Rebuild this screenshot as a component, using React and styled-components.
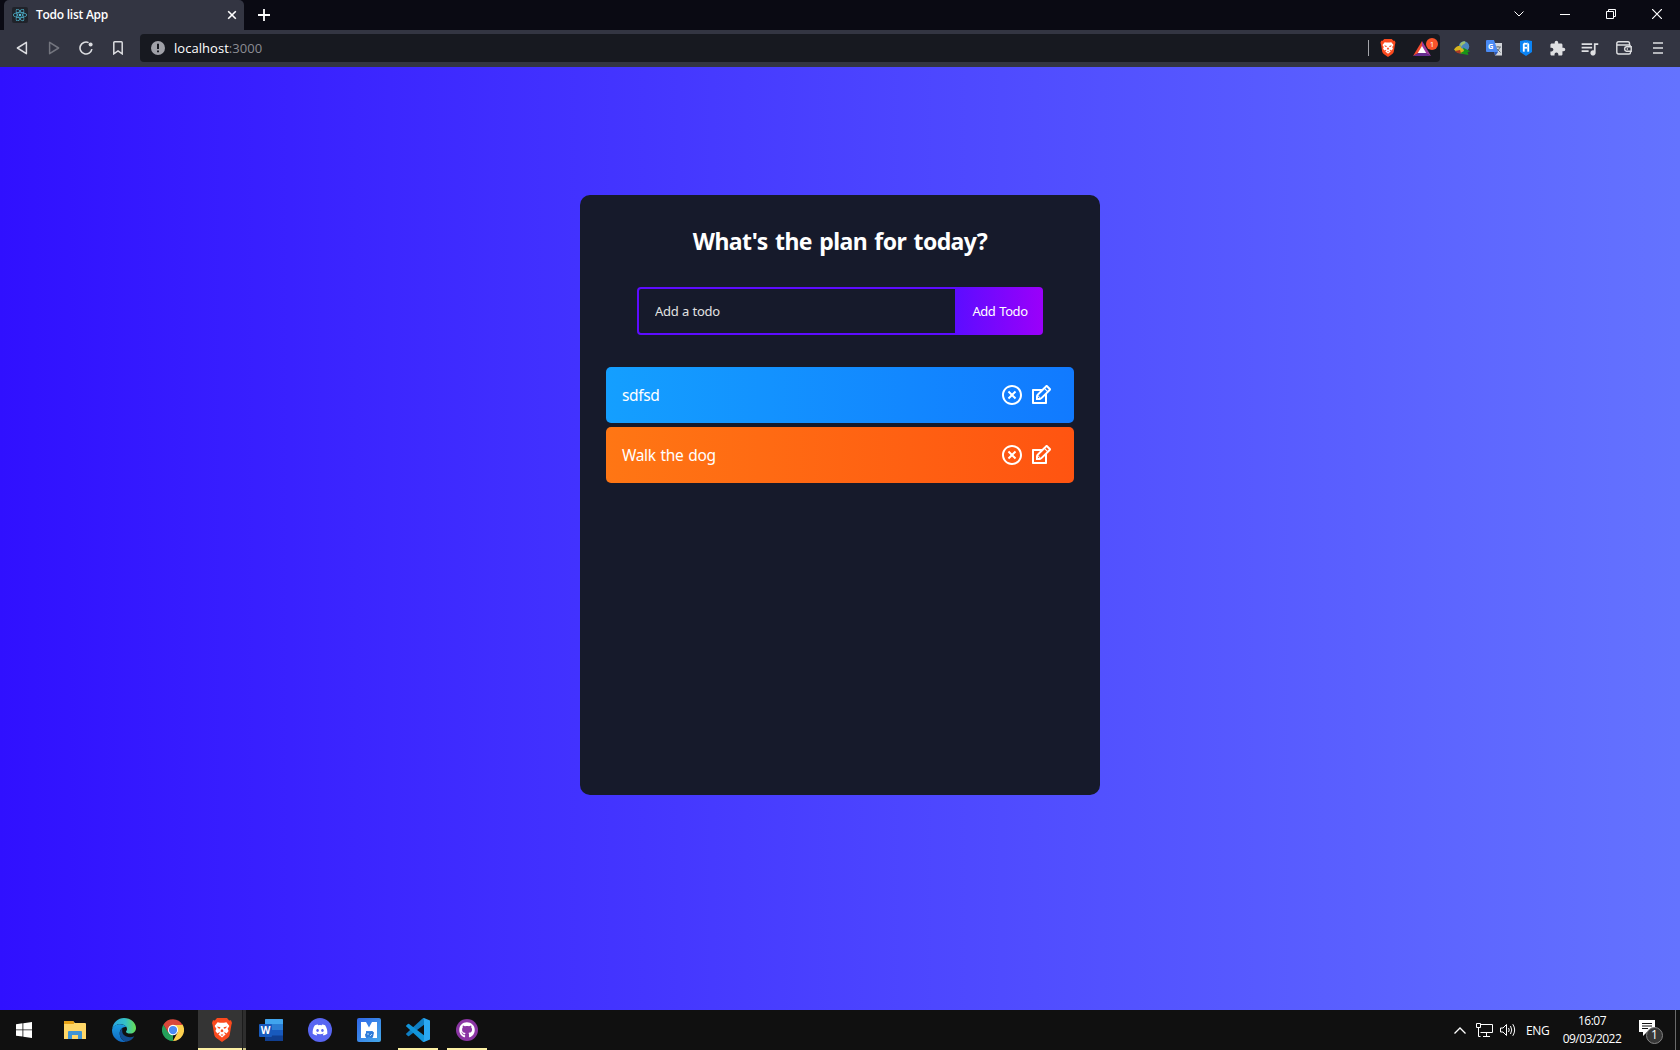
import React from "react";
import styled, { createGlobalStyle, css } from "styled-components";
import { RiCloseCircleLine } from "react-icons/ri";
import { TiEdit } from "react-icons/ti";
import { FaDiscord, FaGithub, FaReact } from "react-icons/fa";
import { MdExtension, MdQueueMusic } from "react-icons/md";

const UI_FONT = `"Open Sans", "Noto Sans", sans-serif`;
const APP_FONT = `"Noto Sans", "Open Sans", sans-serif`;

const GlobalStyle = createGlobalStyle`
  * { box-sizing: border-box; margin: 0; padding: 0; }
  body { font-family: ${UI_FONT}; background: #111; overflow: hidden; }
  svg { display: block; flex: none; }
`;

const Desktop = styled.div`
  display: flex;
  flex-direction: column;
  width: 1680px;
  height: 1050px;
`;

/* ---------- browser chrome ---------- */
const TabStrip = styled.header`
  display: flex;
  align-items: stretch;
  height: 30px;
  padding-left: 4px;
  background: #0a0a13;
  color: #fff;
`;
const Tab = styled.div`
  display: flex;
  align-items: center;
  width: 240px;
  padding: 0 7px 0 8px;
  border-radius: 5px 5px 0 0;
  background: #333542;
`;
const Favicon = styled.span`
  display: grid;
  place-items: center;
  width: 16px;
  height: 16px;
  border-radius: 2px;
  background: #20232a;
  color: #53c1de;
`;
const TabTitle = styled.span`
  flex: 1;
  margin-left: 8px;
  font-size: 12px;
  font-weight: 600;
  letter-spacing: -0.25px;
  line-height: 30px;
`;
const NewTab = styled.div`
  display: flex;
  align-items: center;
  padding-left: 14px;
`;
const WindowControls = styled.div`
  display: flex;
  margin-left: auto;
`;
const WindowButton = styled.div`
  display: grid;
  place-items: center;
  width: 46px;
  height: 28px;
`;
const Toolbar = styled.nav`
  display: flex;
  align-items: center;
  height: 37px;
  padding: 0 6px;
  background: #333542;
  color: #dcdde1;
`;
const NavButton = styled.span`
  display: grid;
  place-items: center;
  width: 32px;
  height: 28px;
  margin-top: -1px;
  opacity: ${(p) => (p.$dim ? 0.38 : 1)};
`;
const AddressBar = styled.div`
  display: flex;
  align-items: center;
  width: 1300px;
  height: 28px;
  margin: -1px 0 0 6px;
  padding: 0 2px 0 11px;
  border-radius: 4px;
  background: #171920;
`;
const Address = styled.span`
  flex: 1;
  margin-left: 9px;
  color: #fff;
  font-size: 13px;
  letter-spacing: 0.04px;
`;
const Port = styled.span`
  color: #8b8c93;
`;
const Divider = styled.span`
  width: 1px;
  height: 16px;
  background: #a4a5aa;
`;
const Shield = styled.span`
  display: grid;
  place-items: center;
  margin: 0 17px 0 11px;
`;
const Rewards = styled.span`
  position: relative;
  width: 25px;
  height: 24px;
  padding-top: 5px;
`;
const RewardsBadge = styled.span`
  position: absolute;
  top: 2px;
  right: 0;
  width: 12px;
  height: 12px;
  border-radius: 50%;
  background: #fb542b;
  color: #fff;
  font-size: 8px;
  line-height: 12px;
  text-align: center;
`;
const Extensions = styled.div`
  display: flex;
  margin-left: 6px;
`;
const Extension = styled.span`
  display: grid;
  place-items: center;
  width: ${(p) => p.$w || 32}px;
  height: 28px;
  margin-top: -1px;
  color: #dedfe2;
`;

/* ---------- todo page ---------- */
const Page = styled.main`
  flex: 1;
  padding-top: 128px;
  background: linear-gradient(90deg, #3010ff 0%, #6473ff 100%);
  font-family: ${APP_FONT};
`;
const TodoApp = styled.section`
  width: 520px;
  height: 600px;
  margin: 0 auto;
  padding-top: 32px;
  border-radius: 10px;
  background: #161a2b;
  text-align: center;
`;
const Heading = styled.h1`
  height: 28px;
  color: #fff;
  font-size: 23px;
  font-weight: 700;
  line-height: 29px;
  letter-spacing: -0.6px;
  word-spacing: 2px;
  white-space: nowrap;
`;
const TodoForm = styled.form`
  display: flex;
  justify-content: center;
  margin: 32px 0;
`;
const TodoInput = styled.input`
  width: 320px;
  height: 48px;
  padding: 0 32px 0 16px;
  border: 2px solid #5d0cff;
  border-radius: 4px 0 0 4px;
  outline: none;
  background: transparent;
  color: #fff;
  font-family: inherit;
  font-size: 13px;
  letter-spacing: -0.3px;
  word-spacing: 0.5px;
  &::placeholder {
    color: #e2e2e2;
    opacity: 1;
  }
`;
const TodoButton = styled.button`
  width: 86px;
  height: 48px;
  border: none;
  border-radius: 0 4px 4px 0;
  background: linear-gradient(90deg, #5d0cff 0%, #9b00fa 100%);
  color: #fff;
  font-family: inherit;
  font-size: 13px;
  letter-spacing: -0.45px;
  word-spacing: 1px;
  white-space: nowrap;
`;
const rowColors = {
  blue: css`linear-gradient(90deg, #149fff 0%, #117aff 100%)`,
  orange: css`linear-gradient(90deg, #ff7614 0%, #ff5411 100%)`,
};
const TodoRow = styled.div`
  display: flex;
  align-items: center;
  justify-content: space-between;
  width: 90%;
  height: 56px;
  margin: 4px auto;
  padding: 0 21px 0 16px;
  border-radius: 5px;
  background: ${(p) => rowColors[p.$tone]};
  color: #fff;
  font-size: 15.5px;
  letter-spacing: -0.35px;
  word-spacing: 1.2px;
`;
const RowIcons = styled.div`
  display: flex;
  align-items: center;
  gap: 5px;
`;

/* ---------- taskbar ---------- */
const Taskbar = styled.footer`
  display: flex;
  height: 40px;
  background: #101010;
  color: #fff;
`;
const StartButton = styled.div`
  display: grid;
  place-items: center;
  width: 48px;
  margin-right: 3px;
`;
const TaskItem = styled.div`
  display: flex;
  flex-direction: column;
  align-items: center;
  justify-content: center;
  width: 48px;
  height: 40px;
  margin-right: 1px;
  ${(p) => p.$open && css`background: linear-gradient(#fcf0a4, #fcf0a4) 4px 38px / 40px 2px no-repeat;`}
  ${(p) =>
    p.$active &&
    css`
      background:
        linear-gradient(#fcf0a4, #fcf0a4) 0 38px / 44px 2px no-repeat,
        linear-gradient(#c9c184, #c9c184) 45px 38px / 3px 2px no-repeat,
        linear-gradient(90deg, #343434 44px, #1c1c1c 44px 45px, #2e2e2e 45px);
    `}
`;
const Disc = styled.span`
  display: grid;
  place-items: center;
  width: ${(p) => p.$size}px;
  height: ${(p) => p.$size}px;
  border-radius: 50%;
  background: ${(p) => p.$bg};
`;
const Tray = styled.div`
  display: flex;
  align-items: center;
  margin-left: auto;
  font-size: 12px;
`;
const TrayIcon = styled.span`
  margin-right: ${(p) => p.$gap}px;
`;
const Language = styled.span`
  width: 24px;
  margin-right: 12px;
  letter-spacing: -0.3px;
`;
const Clock = styled.div`
  width: 60px;
  text-align: center;
  line-height: 18px;
  font-size: 12px;
  letter-spacing: -0.5px;
  white-space: nowrap;
`;
const Notifications = styled.div`
  position: relative;
  width: 24px;
  height: 24px;
  margin: 3px 12px 0 17px;
`;
const Count = styled.span`
  position: absolute;
  left: 7px;
  top: 7px;
  width: 17px;
  height: 17px;
  border: 1px solid #858585;
  border-radius: 50%;
  background: #373737;
  font-size: 12px;
  line-height: 14px;
  text-align: center;
`;
const ShowDesktop = styled.span`
  width: 5px;
  height: 40px;
  border-left: 1px solid #6a6a6a;
`;

const Stroke = ({ w = 16, h = w, d, sw = 1.5, ...rest }) => (
  <svg width={w} height={h} viewBox={`0 0 ${w} ${h}`} fill="none" stroke="currentColor" strokeWidth={sw} {...rest}>
    <path d={d} />
  </svg>
);

const BraveLion = ({ w, h }) => (
  <svg width={w} height={h} viewBox="0 0 20 24">
    <path d="M5 0H15L17.2 2.4L19 2.2L20 5L19.4 7L17.7 17Q17.2 19 15.7 20L10 24L4.3 20Q2.8 19 2.3 17L.6 7L0 5L1 2.2L2.8 2.4Z" fill="#fb4a1e" />
    <path d="M5.6 4.2L8 4.8H12L14.4 4.2L17.4 8L15.6 10.8L16.6 13L14.6 15.4L12.8 14.2L12 14.8L13.6 16.6L10 19.6L6.4 16.6L8 14.8L7.2 14.2L5.4 15.4L3.4 13L4.4 10.8L2.6 8Z" fill="#fff" />
    <path d="M5 8.4L8.4 9.2L8 10.7L6.2 10.2ZM15 8.4L11.6 9.2L12 10.7L13.8 10.2ZM9.5 11.2H10.5L11.6 13.3L10 14.2L8.4 13.3ZM8.4 17L10 16.2L11.6 17L10 17.7Z" fill="#fb4a1e" />
  </svg>
);

const Explorer = () => (
  <svg width="22" height="19" viewBox="0 0 22 19">
    <path d="M0 1Q0 0 1 0H9L11 2H21Q22 2 22 3V18H0Z" fill="#ffd767" />
    <path d="M0 1Q0 0 1 0H9L10 1V3H0Z" fill="#e8a317" />
    <path d="M4 18V11Q4 10 5 10H17Q18 10 18 11V18H14V14H8V18Z" fill="#3f94d5" />
  </svg>
);

const Edge = () => (
  <svg width="24" height="24" viewBox="0 0 24 24">
    <defs>
      <linearGradient id="edgeTop" x1="0" x2="1">
        <stop offset="0" stopColor="#2aa5e0" />
        <stop offset=".55" stopColor="#35c1c7" />
        <stop offset="1" stopColor="#68df50" />
      </linearGradient>
      <linearGradient id="edgeSide" x2="0" y2="1">
        <stop offset="0" stopColor="#1b9de2" />
        <stop offset="1" stopColor="#1068c0" />
      </linearGradient>
    </defs>
    <path d="M.3 10.5C1.2 4.4 6 0 12 0C18.7 0 24 4.8 24 10C24 13.5 21.5 15.6 18.3 15.6C15.7 15.6 14 14.8 14 13.8C14 13 15 12.6 15 11C15 8.4 12 6.3 8.2 6.3C4.5 6.3 1.6 8 .3 10.5Z" fill="url(#edgeTop)" />
    <path d="M0 12C.5 8.4 4.2 6.3 8.2 6.3C11 6.3 13.4 7.4 14.5 9.1C11 8.1 7.7 11.3 7.7 15.3C7.7 19.3 10.3 22.8 14 23.8C6.4 25.2 0 19.7 0 12Z" fill="url(#edgeSide)" />
    <path d="M10.6 10.2C8.5 11.4 7.7 13.4 7.7 15.3C7.7 19.5 10.5 23.1 14.2 23.8C18 23.1 20.7 21.3 22.3 18.2C17.5 20.5 10.3 18.5 10.2 13C10.1 11.8 10.3 10.8 10.6 10.2Z" fill="#124d91" />
  </svg>
);

const Chrome = () => (
  <svg width="22" height="22" viewBox="0 0 24 24">
    <path d="M12 12V24A12 12 0 0 1 1.6 6L7.2 14.8Z" fill="#24a05a" />
    <path d="M12 6H22.4A12 12 0 0 1 12 24L17 14.8Z" fill="#fdd04e" />
    <path d="M1.6 6A12 12 0 0 1 22.4 6.5H12L7 15Z" fill="#d9483b" />
    <circle cx="12" cy="12" r="5.6" fill="#fff" />
    <circle cx="12" cy="12" r="4.5" fill="#4a8af4" />
  </svg>
);

const WordText = styled.text`
  font: 700 10px ${UI_FONT};
`;
const Word = () => (
  <svg width="24" height="22" viewBox="0 0 24 22">
    <rect x="6" width="18" height="22" rx="1" fill="#185abd" />
    <path d="M6 1Q6 0 7 0H23Q24 0 24 1V5.5H6Z" fill="#41a5ee" />
    <path d="M6 5.5H24V11H6Z" fill="#2b7cd3" />
    <path d="M6 16.5H24V22H7Q6 22 6 21Z" fill="#103f91" />
    <rect y="5" width="13" height="13" rx="1" fill="#185abd" />
    <WordText x="6.5" y="15" fill="#fff" textAnchor="middle">W</WordText>
  </svg>
);

const MTile = () => (
  <svg width="24" height="24" viewBox="0 0 24 24">
    <defs>
      <linearGradient id="mTile" x2="1" y2="1">
        <stop offset="0" stopColor="#2f66e8" />
        <stop offset="1" stopColor="#45a9e8" />
      </linearGradient>
    </defs>
    <rect width="24" height="24" rx="2" fill="url(#mTile)" />
    <path d="M4 4H9L12 9.5L15 4H20V20H15.5V13H9V20H4Z" fill="#fff" />
    <path d="M8 16.5L10 13.8L13 14.2L15 13L17 14.5L16 19L14 20L12 18.5L10 20L8.5 19Z" fill="#2f7bd8" />
    <path d="M10 16H12M13 18L15 16" stroke="#b9dcf7" />
  </svg>
);

const VsCode = () => (
  <svg width="24" height="24" viewBox="0 0 24 24">
    <path d="M18 0V6.7L3.1 18.1Q2.5 18.5 1.9 18L.3 16.6Q-.3 16 .3 15.4L16.5 .6Q17.2 0 18 0Z" fill="#0f7fc4" />
    <path d="M18 24V17.3L3.1 5.9Q2.5 5.5 1.9 6L.3 7.4Q-.3 8 .3 8.6L16.5 23.4Q17.2 24 18 24Z" fill="#1295da" />
    <path d="M18 0L24 2.6V21.4L18 24L17.3 23.6L18 22V2L17.3 .3Z" fill="#2aa8f2" />
  </svg>
);

const Idm = () => (
  <svg width="16" height="15" viewBox="0 0 16 15">
    <circle cx="10" cy="5.4" r="5.2" fill="#4a86bd" />
    <path d="M6 3Q8 0 11 .4L11.5 2L8.5 4L7 6Z" fill="#9fc06a" />
    <path d="M0 8.5Q2 5 6 4.8L7.5 7Q9.5 8.5 12 8.5L9 12.5Q3 12.5 0 8.5Z" fill="#d8b51e" />
    <path d="M1 10L6 9L7 12.3Q3 13 1 10Z" fill="#a83a26" />
    <path d="M9 6.5L16 10.2L13.5 11.2L14.5 14L10 13.2L6 12.2L10 10Z" fill="#189418" />
  </svg>
);

const GText = styled.text`
  font: 700 7.5px ${UI_FONT};
`;
const Translate = () => (
  <svg width="16" height="16" viewBox="0 0 16 16">
    <path d="M7 3H16V15.5H9Z" fill="#d3d5d9" />
    <path d="M9 7H15M12 6V7M14 7Q13 11 9.5 12M10.5 8.5L14.5 12.5" stroke="#687177" fill="none" />
    <path d="M0 1Q0 0 1 0H8L12 12H1Q0 12 0 11Z" fill="#4a8af4" />
    <path d="M8 12H12L9.5 15.5Z" fill="#2d57b5" />
    <GText x="4.7" y="9" fill="#fff" textAnchor="middle">G</GText>
  </svg>
);

const ShieldExt = () => (
  <svg width="12" height="16" viewBox="0 0 12 16">
    <path d="M0 1L6 0L12 1V12L6 16L0 12Z" fill="#0b84f5" />
    <path d="M3 11.5V4L4.6 2.8V11.5ZM9 11.5V4L7.4 2.8V11.5ZM4 3H8V4.6H4ZM4 7H8V8.5H4Z" fill="#fff" stroke="#fff" strokeWidth=".3" />
  </svg>
);

const Wallet = () => (
  <svg width="16" height="14" viewBox="0 0 16 14" fill="none" stroke="currentColor" strokeWidth="1.4">
    <path d="M13.5 4V2.5Q13.5 .8 12 .8H2.5Q.8 .8 .8 2.5V11Q.8 13 2.5 13H13Q14.5 13 14.5 11.5V10.5M.8 3.4Q1 4 2.5 4H13Q14.5 4 14.5 5.5" />
    <path d="M15.2 5.8H10.4Q8.6 6 8.6 8Q8.6 10 10.4 10.2H15.2Z" />
    <path d="M10.7 8H12" />
  </svg>
);

const todos = [
  { id: 1, text: "sdfsd", tone: "blue" },
  { id: 2, text: "Walk the dog", tone: "orange" },
];

export default function App() {
  return (
    <Desktop>
      <GlobalStyle />
      <TabStrip>
        <Tab>
          <Favicon><FaReact size={14} /></Favicon>
          <TabTitle>Todo list App</TabTitle>
          <Stroke w={10} d="M1.2 1.2L8.8 8.8M8.8 1.2L1.2 8.8" sw={1.6} />
        </Tab>
        <NewTab><Stroke w={12} d="M6 0V12M0 6H12" sw={1.8} /></NewTab>
        <WindowControls>
          <WindowButton><Stroke w={10} h={6} d="M.5 .5L5 5L9.5 .5" sw={1} /></WindowButton>
          <WindowButton><Stroke w={10} h={1} d="M0 .5H10" sw={1} /></WindowButton>
          <WindowButton><Stroke w={10} d="M.5 2.5H7.5V9.5H.5ZM2.5 2.5V.5H9.5V7.5H7.5" sw={1} /></WindowButton>
          <WindowButton><Stroke w={10} d="M0 0L10 10M10 0L0 10" sw={1.2} /></WindowButton>
        </WindowControls>
      </TabStrip>
      <Toolbar>
        <NavButton><Stroke w={12} h={14} d="M10.4 1.3V12.7L1.4 7Z" strokeLinejoin="round" /></NavButton>
        <NavButton $dim><Stroke w={12} h={14} d="M1.6 1.3V12.7L10.6 7Z" strokeLinejoin="round" /></NavButton>
        <NavButton>
          <svg width="14" height="14" viewBox="0 0 14 14" fill="none" stroke="currentColor" strokeWidth="1.6">
            <path d="M12.9 8.2A6 6 0 1 1 9.6 1.6" />
            <circle cx="11.6" cy="3.4" r="2" fill="currentColor" stroke="none" />
          </svg>
        </NavButton>
        <NavButton><Stroke w={10} h={14} d="M.8 1.7Q.8 .8 1.7 .8H8.3Q9.2 .8 9.2 1.7V12.8L5 9.8L.8 12.8Z" sw={1.5} /></NavButton>
        <AddressBar>
          <svg width="14" height="14" viewBox="0 0 14 14">
            <circle cx="7" cy="7" r="7" fill="#a0a1a8" />
            <path d="M6 2.7H8V8H6ZM6 9.4H8V11.3H6Z" fill="#171920" />
          </svg>
          <Address>localhost<Port>:3000</Port></Address>
          <Divider />
          <Shield><BraveLion w={16} h={18} /></Shield>
          <Rewards>
            <svg width="18" height="15" viewBox="0 0 18 15">
              <path d="M9 0L0 15L9 10.5Z" fill="#f04a2e" />
              <path d="M9 0L18 15L9 10.5Z" fill="#a03a9e" />
              <path d="M0 15H18L9 10Z" fill="#662d91" />
              <path d="M9 5L4.8 12H13.2Z" fill="#fff" />
            </svg>
            <RewardsBadge>1</RewardsBadge>
          </Rewards>
        </AddressBar>
        <Extensions>
          <Extension><Idm /></Extension>
          <Extension><Translate /></Extension>
          <Extension><ShieldExt /></Extension>
          <Extension $w={31}><MdExtension size={17} /></Extension>
          <Extension><MdQueueMusic size={21} /></Extension>
          <Extension $w={37}><Wallet /></Extension>
          <Extension><Stroke w={10} h={12} d="M0 1H10M0 6H10M0 11H10" sw={1.5} /></Extension>
        </Extensions>
      </Toolbar>

      <Page>
        <TodoApp>
          <Heading>What's the plan for today?</Heading>
          <TodoForm onSubmit={(e) => e.preventDefault()}>
            <TodoInput placeholder="Add a todo" />
            <TodoButton>Add Todo</TodoButton>
          </TodoForm>
          {todos.map((t) => (
            <TodoRow key={t.id} $tone={t.tone}>
              <span>{t.text}</span>
              <RowIcons>
                <RiCloseCircleLine size={24} />
                <TiEdit size={24} />
              </RowIcons>
            </TodoRow>
          ))}
        </TodoApp>
      </Page>

      <Taskbar>
        <StartButton>
          <svg width="16" height="16" viewBox="0 0 16 16" fill="#fff">
            <path d="M0 2.2L6.5 1.3V7.5H0ZM7.3 1.2L16 0V7.5H7.3ZM0 8.3H6.5V14.6L0 13.7ZM7.3 8.3H16V16L7.3 14.8Z" />
          </svg>
        </StartButton>
        <TaskItem><Explorer /></TaskItem>
        <TaskItem><Edge /></TaskItem>
        <TaskItem><Chrome /></TaskItem>
        <TaskItem $active><BraveLion w={20} h={24} /></TaskItem>
        <TaskItem><Word /></TaskItem>
        <TaskItem><Disc $size={24} $bg="#5865f2"><FaDiscord size={16} /></Disc></TaskItem>
        <TaskItem><MTile /></TaskItem>
        <TaskItem $open><VsCode /></TaskItem>
        <TaskItem $open><Disc $size={22} $bg="#8b35a3"><FaGithub size={16} /></Disc></TaskItem>
        <Tray>
          <TrayIcon $gap={10}><Stroke w={12} h={7} d="M.5 6.5L6 1L11.5 6.5" sw={1.3} /></TrayIcon>
          <TrayIcon $gap={7}><Stroke w={17} h={14} d="M5 1.5H16.5V9.5H4.5M10.5 10V13M7 13.5H14M.5 .5H4.5V4.5H.5ZM2.5 5V13.5H4.5" sw={1} /></TrayIcon>
          <TrayIcon $gap={9}><Stroke w={17} h={14} d="M.5 5V9H3L6.5 12.5V1.5L3 5ZM8.5 5Q10 7 8.5 9M10.5 3Q13 7 10.5 11M12.8 1.2Q16.5 7 12.8 12.8" sw={1} /></TrayIcon>
          <Language>ENG</Language>
          <Clock>
            <div>16:07</div>
            <div>09/03/2022</div>
          </Clock>
          <Notifications>
            <svg width="16" height="16" viewBox="0 0 16 16">
              <path d="M0 0H16V12H8L4 16V12H0Z" fill="#fff" />
              <path d="M3 3.5H13M3 6H13M3 8.5H9" stroke="#111" />
            </svg>
            <Count>1</Count>
          </Notifications>
          <ShowDesktop />
        </Tray>
      </Taskbar>
    </Desktop>
  );
}
